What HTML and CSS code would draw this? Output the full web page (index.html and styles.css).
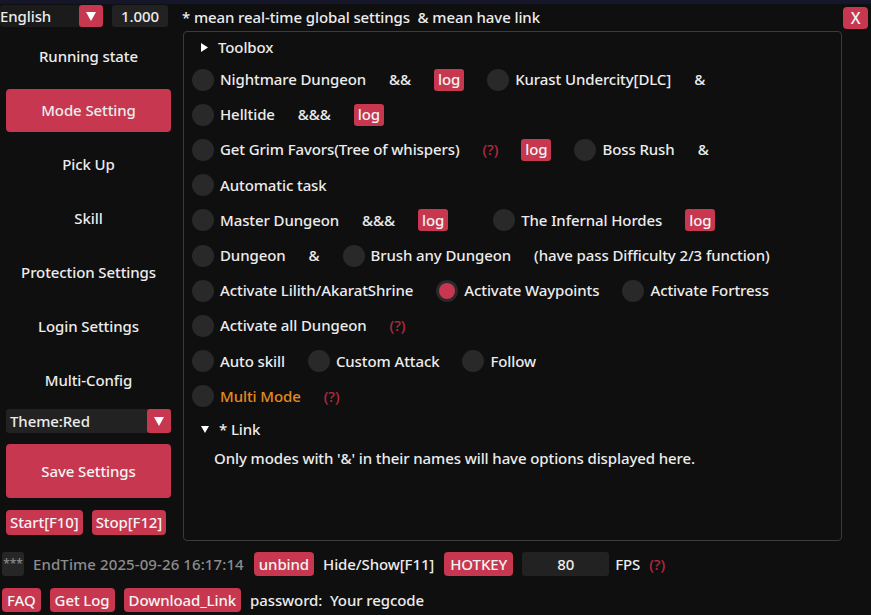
FILE: index.html
```html
<!DOCTYPE html>
<html lang="en">
<head>
<meta charset="utf-8">
<title>Settings</title>
<link rel="stylesheet" href="styles.css">
</head>
<body>
<div class="titlebar"></div>
<header class="topbar">
  <div class="combo lang">
    <span class="combo-value">English</span>
    <span class="combo-arrow"><svg width="10" height="9" viewBox="0 0 10 9"><polygon points="0,0 10,0 5,9" fill="#fff"/></svg></span>
  </div>
  <div class="field scale">1.000</div>
  <span class="note">* mean real-time global settings &nbsp;&amp; mean have link</span>
  <button class="btn close">X</button>
</header>

<div class="layout">
  <nav class="sidebar">
    <div class="nav-item">Running state</div>
    <div class="nav-item"><span class="nav-active">Mode Setting</span></div>
    <div class="nav-item">Pick Up</div>
    <div class="nav-item">Skill</div>
    <div class="nav-item">Protection Settings</div>
    <div class="nav-item">Login Settings</div>
    <div class="nav-item">Multi-Config</div>
    <div class="combo theme">
      <span class="combo-value">Theme:Red</span>
      <span class="combo-arrow"><svg width="10" height="9" viewBox="0 0 10 9"><polygon points="0,0 10,0 5,9" fill="#fff"/></svg></span>
    </div>
    <button class="btn save">Save Settings</button>
    <div class="run-buttons">
      <button class="btn small">Start[F10]</button>
      <button class="btn small">Stop[F12]</button>
    </div>
  </nav>

  <section class="panel">
    <div class="tree-node">
      <svg class="tree-arrow" width="7" height="9" viewBox="0 0 7 9"><polygon points="0,0 7,4.5 0,9" fill="#fff"/></svg>
      <span>Toolbox</span>
    </div>

    <div class="row">
      <span class="radio"></span><span class="label">Nightmare Dungeon</span>
      <span class="amp">&amp;&amp;</span>
      <span class="tag">log</span>
      <span class="radio"></span><span class="label">Kurast Undercity[DLC]</span>
      <span class="amp">&amp;</span>
    </div>
    <div class="row">
      <span class="radio"></span><span class="label">Helltide</span>
      <span class="amp">&amp;&amp;&amp;</span>
      <span class="tag">log</span>
    </div>
    <div class="row">
      <span class="radio"></span><span class="label">Get Grim Favors(Tree of whispers)</span>
      <span class="help">(?)</span>
      <span class="tag">log</span>
      <span class="radio"></span><span class="label">Boss Rush</span>
      <span class="amp">&amp;</span>
    </div>
    <div class="row">
      <span class="radio"></span><span class="label">Automatic task</span>
    </div>
    <div class="row">
      <span class="radio"></span><span class="label">Master Dungeon</span>
      <span class="amp">&amp;&amp;&amp;</span>
      <span class="tag">log</span>
      <span class="radio wide"></span><span class="label">The Infernal Hordes</span>
      <span class="tag">log</span>
    </div>
    <div class="row">
      <span class="radio"></span><span class="label">Dungeon</span>
      <span class="amp">&amp;</span>
      <span class="radio"></span><span class="label">Brush any Dungeon</span>
      <span class="amp">(have pass Difficulty 2/3 function)</span>
    </div>
    <div class="row">
      <span class="radio"></span><span class="label">Activate Lilith/AkaratShrine</span>
      <span class="radio checked"></span><span class="label">Activate Waypoints</span>
      <span class="radio"></span><span class="label">Activate Fortress</span>
    </div>
    <div class="row">
      <span class="radio"></span><span class="label">Activate all Dungeon</span>
      <span class="help">(?)</span>
    </div>
    <div class="row">
      <span class="radio"></span><span class="label">Auto skill</span>
      <span class="radio"></span><span class="label">Custom Attack</span>
      <span class="radio"></span><span class="label">Follow</span>
    </div>
    <div class="row">
      <span class="radio"></span><span class="label multi">Multi Mode</span>
      <span class="help">(?)</span>
    </div>

    <div class="tree-node">
      <svg class="tree-arrow" width="8" height="7" viewBox="0 0 8 7"><polygon points="0,0 8,0 4,7" fill="#fff"/></svg>
      <span>* Link</span>
    </div>
    <p class="hint">Only modes with '&amp;' in their names will have options displayed here.</p>
  </section>
</div>

<footer class="footer">
  <div class="footer-row">
    <span class="mask">***</span>
    <span class="muted">EndTime 2025-09-26 16:17:14</span>
    <button class="btn">unbind</button>
    <span>Hide/Show[F11]</span>
    <button class="btn hotkey">HOTKEY</button>
    <div class="field fps">80</div>
    <span class="fps-label">FPS</span>
    <span class="help">(?)</span>
  </div>
  <div class="footer-row">
    <button class="btn">FAQ</button>
    <button class="btn">Get Log</button>
    <button class="btn">Download_Link</button>
    <span>password: &nbsp;Your regcode</span>
  </div>
</footer>
</body>
</html>
```

FILE: styles.css
```css
* {
  box-sizing: border-box;
}

html, body {
  margin: 0;
  height: 100%;
}

body {
  background: #0f0f0f;
  color: #ececec;
  font-family: "Noto Sans", "Open Sans", sans-serif;
  font-size: 15px;
  font-weight: 500;
  letter-spacing: -0.1px;
  line-height: 1;
  overflow: hidden;
}

/* shared widgets */
.btn {
  font: inherit;
  letter-spacing: inherit;
  color: #f4f4f4;
  background: #c7374f;
  border: none;
  border-radius: 4px;
  padding: 0 5px;
  height: 24px;
  cursor: pointer;
}

.field {
  background: #222222;
  border-radius: 3px;
  height: 22px;
  display: flex;
  align-items: center;
}

.combo {
  display: flex;
  align-items: center;
  background: #1b1b1b;
  border-radius: 3px;
  height: 22px;
}

.combo-value {
  flex: 1;
}

.combo-arrow {
  width: 24px;
  height: 100%;
  background: #c7374f;
  border-radius: 3px;
  display: flex;
  align-items: center;
  justify-content: center;
}

.help {
  color: #b22a42;
}

/* title strip + top toolbar */
.titlebar {
  height: 4px;
  background: #16162a;
}

.topbar {
  display: flex;
  align-items: flex-start;
  height: 26px;
}

.combo.lang {
  margin-top: 1px;
  width: 103px;
}

.field.scale {
  margin: 1px 0 0 9px;
  width: 56px;
  justify-content: center;
}

.note {
  margin: 6px 0 0 14px;
}

.btn.close {
  margin: 3px 3px 0 auto;
  width: 25px;
  height: 22px;
  padding: 0;
  font-size: 16px;
}

/* main area */
.layout {
  display: flex;
  height: 511px;
}

.sidebar {
  width: 177px;
  padding-left: 6px;
  display: flex;
  flex-direction: column;
}

.nav-item {
  width: 165px;
  height: 54px;
  display: flex;
  align-items: center;
  justify-content: center;
  padding-bottom: 1px;
}

.nav-active {
  width: 100%;
  height: 43px;
  background: #c7374f;
  border-radius: 4px;
  display: flex;
  align-items: center;
  justify-content: center;
}

.combo.theme {
  width: 165px;
  height: 24px;
  margin-top: 1px;
  background: #222222;
  padding-left: 4px;
}

.btn.save {
  width: 165px;
  height: 54px;
  margin-top: 11px;
}

.run-buttons {
  display: flex;
  gap: 9px;
  margin-top: 12px;
}

.btn.small {
  height: 25px;
  padding: 0 4px;
}

.panel {
  margin: 1px 0 0 6px;
  width: 659px;
  height: 510px;
  border: 1px solid #3a3a40;
  border-radius: 4px;
  padding: 0 8px;
}

.tree-node {
  height: 31px;
  display: flex;
  align-items: center;
  padding-left: 9px;
  gap: 10px;
}

.row {
  height: 35.2px;
  display: flex;
  align-items: center;
}

.tree-node + .row {
  margin-top: -1px;
}

.radio {
  width: 22px;
  height: 22px;
  border-radius: 50%;
  background: #292929;
  flex: none;
  margin-right: 6px;
  display: flex;
  align-items: center;
  justify-content: center;
}

.radio.checked::after {
  content: "";
  width: 16px;
  height: 16px;
  border-radius: 50%;
  background: #c7374f;
}

.label {
  margin-right: 23px;
}

.label.multi {
  color: #e38a1e;
}

.amp,
.row .help {
  margin-right: 23px;
}

.tag {
  background: #c7374f;
  color: #f4f4f4;
  border-radius: 3px;
  height: 22px;
  padding: 0 4px;
  display: flex;
  align-items: center;
  margin-right: 23px;
}

.radio.wide {
  margin-left: 22px;
}

.hint {
  margin: 0;
  height: 30px;
  display: flex;
  align-items: center;
  padding-left: 22px;
  padding-bottom: 3px;
}

/* status rows */
.footer {
  padding: 11px 0 0 2px;
}

.footer-row {
  display: flex;
  align-items: center;
  gap: 9px;
  height: 24px;
}

.footer-row + .footer-row {
  margin-top: 12px;
}

.mask {
  width: 22px;
  height: 24px;
  background: #262626;
  color: #8a8a8a;
  border-radius: 3px;
  display: flex;
  align-items: center;
  justify-content: center;
  font-size: 12px;
}

.muted {
  color: #8c8c8c;
  letter-spacing: 0.1px;
  margin-right: 1px;
}

.btn.hotkey {
  padding: 0 6px;
  margin-left: 1px;
}

.field.fps {
  width: 87px;
  height: 24px;
  justify-content: center;
}

.fps-label {
  margin-left: -3px;
}
```
